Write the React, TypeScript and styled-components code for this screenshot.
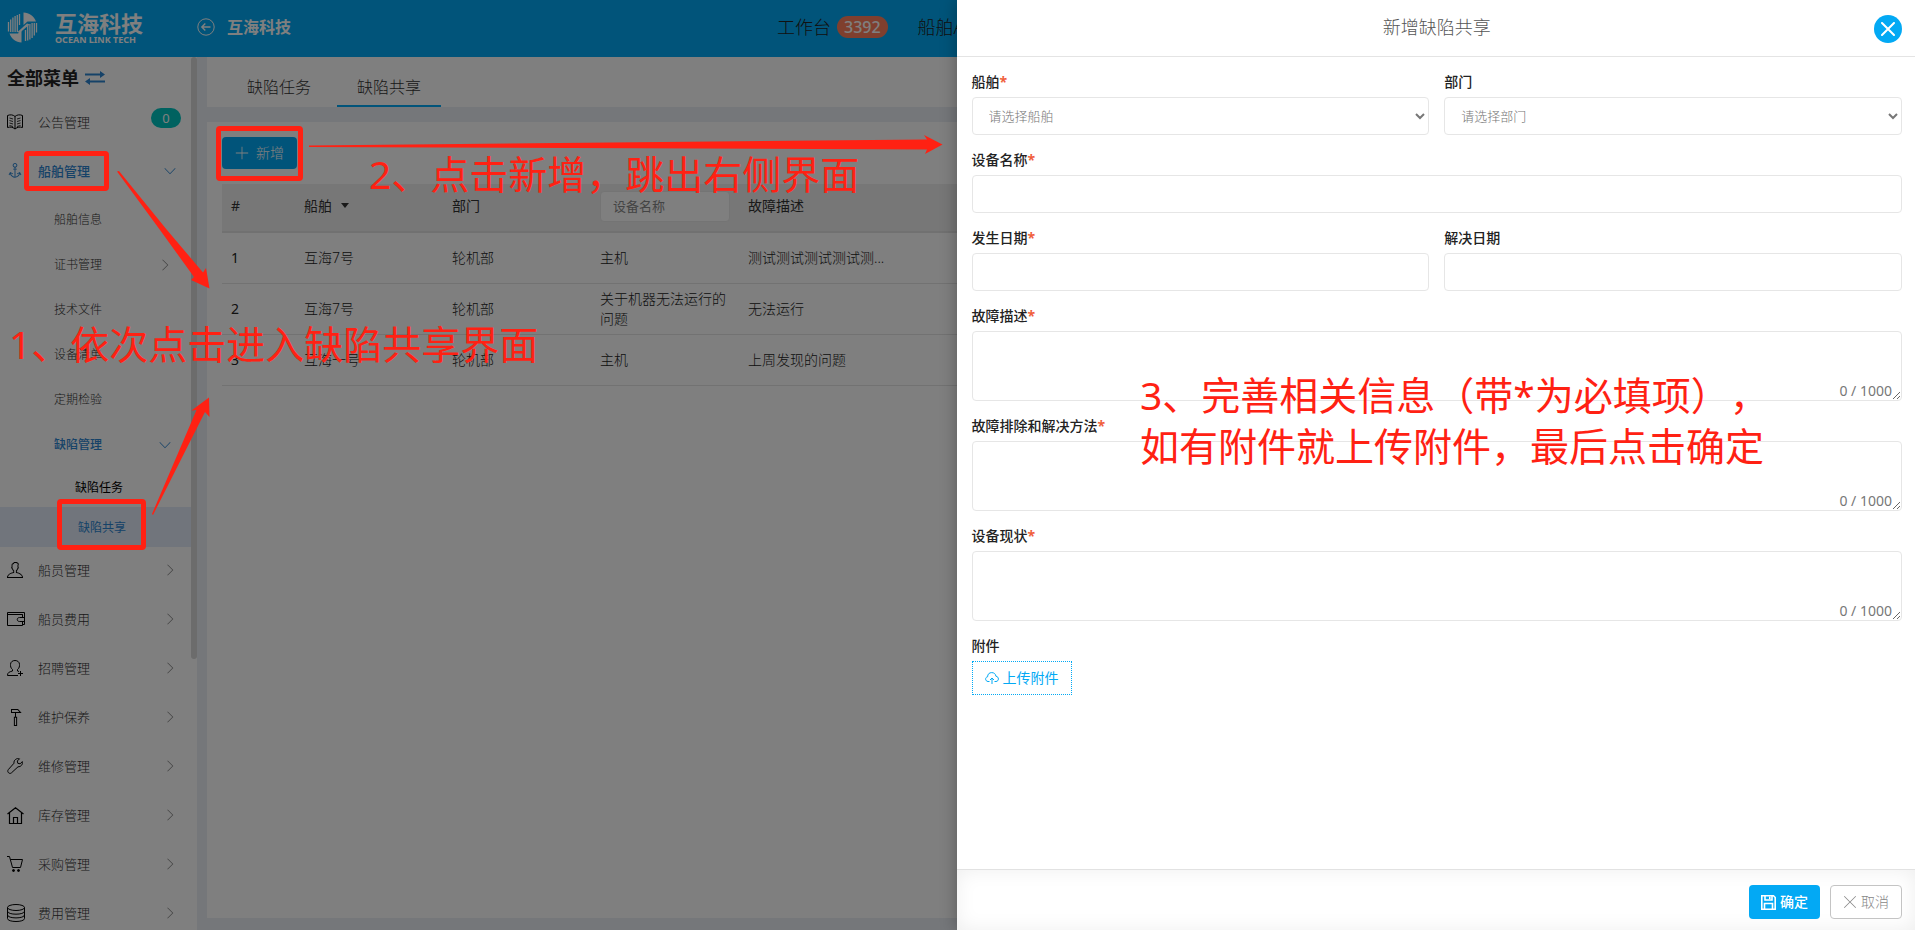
import React from "react";
import styled, { createGlobalStyle, css } from "styled-components";
import { TfiAnchor, TfiAngleDown, TfiAngleRight, TfiClose, TfiHummer, TfiPlus, TfiUser } from "react-icons/tfi";

const PRIMARY = "#03a9f4";
const LINK = "#2d85d0";
const MARK = "#ff2113";

const GlobalStyle = createGlobalStyle`
  *, *::before, *::after { box-sizing: border-box; }
  body {
    margin: 0;
    overflow: hidden;
    font-family: "Noto Sans", "Noto Sans CJK SC", sans-serif;
    font-size: 14px;
    font-weight: 300;
    line-height: 20px;
    color: #222;
    background: #fff;
  }
  button, input, select, textarea { font: inherit; margin: 0; }
  a { color: inherit; text-decoration: none; }
`;

/* ---------- page shell ---------- */

const Page = styled.div`
  position: relative;
  display: flex;
  flex-direction: column;
  height: 100vh;
  overflow: hidden;
`;

const Header = styled.header`
  display: flex;
  align-items: center;
  flex: none;
  height: 57px;
  padding: 0 0 3px 7px;
  background: ${PRIMARY};
  color: #fff;
`;

const Brand = styled.a`
  display: flex;
  align-items: center;
  gap: 17px;
  width: 190px;
`;

const BrandText = styled.span`
  display: flex;
  flex-direction: column;
`;

const BrandName = styled.span`
  font-size: 22px;
  font-weight: 700;
  line-height: 24px;
`;

const BrandSub = styled.span`
  font-size: 9px;
  font-weight: 700;
  line-height: 9px;
  white-space: nowrap;
`;

const Company = styled.a`
  display: flex;
  align-items: center;
  gap: 12px;
  font-size: 16px;
  font-weight: 700;
`;

const TopNav = styled.nav`
  display: flex;
  align-items: center;
  gap: 30px;
  width: 1138px;
  margin-left: auto;
  font-size: 18px;
  color: #222;
`;

const NavLink = styled.a`
  display: flex;
  align-items: center;
  gap: 6px;
`;

const Count = styled.span`
  padding: 0 7px;
  border-radius: 11px;
  background: #ff7f5c;
  color: #fff;
  font-size: 16px;
  font-weight: 500;
  line-height: 22px;
`;

const Main = styled.div`
  display: flex;
  flex: 1;
  min-height: 0;
  background: #ebeff5;
`;

/* ---------- sidebar ---------- */

const Sidebar = styled.aside`
  display: flex;
  flex: none;
  width: 197px;
  overflow: hidden;
  background: #fff;
`;

const Menu = styled.nav`
  flex: 1;
  min-width: 0;
`;

const Rail = styled.div`
  width: 6px;
`;

const RailThumb = styled.div`
  height: 69%;
  border-radius: 3px;
  background: #d8d8d8;
`;

const MenuTitle = styled.h2`
  display: flex;
  align-items: center;
  gap: 6px;
  height: 42px;
  margin: 0;
  padding-left: 7px;
  font-size: 18px;
  font-weight: 700;
  color: #222;
  svg { color: ${LINK}; }
`;

type Level = 1 | 2 | 3;

const levels = {
  1: css`
    height: 49px;
    padding: 0 15px 3px 7px;
    font-size: 13px;
  `,
  2: css`
    height: 45px;
    padding: 0 20px 0 54px;
    font-size: 12px;
  `,
  3: css`
    height: 40px;
    padding: 2px 20px 0 75px;
    font-size: 12px;
    font-weight: 400;
  `,
};

const MenuItem = styled.a<{ $level: Level; $open?: boolean; $current?: boolean }>`
  display: flex;
  align-items: center;
  gap: 15px;
  color: ${(p) => (p.$open || p.$current ? LINK : p.$level === 3 ? "#000" : "#333")};
  font-weight: ${(p) => (p.$open ? 500 : "inherit")};
  ${(p) => levels[p.$level]}
  ${(p) =>
    p.$current &&
    css`
      border-left: 3px solid #e3ebf8;
      background: #e3ebf8;
    `}
`;

const MenuLabel = styled.span`
  flex: 1;
`;

const MenuIcon = styled.span<{ $open?: boolean }>`
  display: flex;
  width: 16px;
  color: ${(p) => (p.$open ? LINK : "#000")};
  svg { flex: none; }
`;

const Arrow = styled.span<{ $open?: boolean }>`
  display: flex;
  color: ${(p) => (p.$open ? LINK : "#888")};
`;

const Bubble = styled.span`
  align-self: flex-start;
  width: 30px;
  margin: 9px -5px 0 0;
  border-radius: 10px;
  background: #00c4c0;
  color: #fff;
  font-weight: 400;
  line-height: 20px;
  text-align: center;
`;

/* ---------- list page ---------- */

const Content = styled.main`
  display: flex;
  flex-direction: column;
  flex: 1;
  gap: 15px;
  min-width: 0;
  padding: 0 10px 12px;
`;

const Tabs = styled.div`
  display: flex;
  gap: 6px;
  height: 50px;
  padding: 0 20px;
  background: #fff;
`;

const Tab = styled.a<{ $active?: boolean }>`
  padding: 20px 20px 8px;
  border-bottom: 2px solid ${(p) => (p.$active ? PRIMARY : "transparent")};
  font-size: 16px;
  color: #333;
`;

const Panel = styled.section`
  display: flex;
  flex-direction: column;
  align-items: flex-start;
  flex: 1;
  gap: 15px;
  padding: 15px;
  background: #fff;
`;

const Table = styled.table`
  width: 100%;
  table-layout: fixed;
  border-collapse: separate;
  border-spacing: 0;
`;

const HeadCell = styled.th<{ $width?: number }>`
  width: ${(p) => (p.$width ? `${p.$width}px` : "auto")};
  height: 49px;
  padding: 0 9px 3px;
  border-bottom: 2px solid #e2e2e2;
  background: #eee;
  font-weight: 400;
  text-align: left;
  color: #333;
`;

const Cell = styled.td`
  height: 51px;
  padding: 0 9px;
  border-bottom: 1px solid #e5e5e5;
  color: #222;
  &:first-child { font-weight: 400; }
`;

const Caret = styled.span`
  display: inline-block;
  margin: 0 0 3px 9px;
  border: 4px solid transparent;
  border-top: 5px solid #333;
  border-bottom: 0;
`;

const FilterInput = styled.input`
  display: block;
  width: 100%;
  height: 31px;
  padding: 0 12px;
  border: 1px solid #e8e8e8;
  border-radius: 4px;
  background: #fff;
  font-size: 13px;
  &::placeholder { color: #888; }
`;

/* ---------- buttons ---------- */

const buttonKinds = {
  add: css`
    height: 32px;
    padding: 0 13px;
    gap: 7px;
    border: 0;
    background: ${PRIMARY};
    color: #fff;
  `,
  primary: css`
    padding: 0 12px;
    border: 0;
    background: ${PRIMARY};
    color: #fff;
    font-weight: 500;
  `,
  plain: css`
    padding: 0 12px;
    border: 1px solid #c4c4c4;
    background: #fff;
    color: #888;
  `,
  upload: css`
    padding: 0 12px;
    border: 1px dotted ${PRIMARY};
    border-radius: 0;
    background: #fff;
    color: ${PRIMARY};
    font-weight: 400;
  `,
};

const Button = styled.button<{ $kind: keyof typeof buttonKinds }>`
  display: inline-flex;
  align-items: center;
  gap: 4px;
  height: 34px;
  border-radius: 4px;
  white-space: nowrap;
  ${(p) => buttonKinds[p.$kind]}
`;

/* ---------- drawer ---------- */

const Backdrop = styled.div`
  position: absolute;
  inset: 0;
  background: rgba(0, 0, 0, 0.5);
`;

const Drawer = styled.section`
  position: absolute;
  inset: 0 0 0 calc(50% - 1px);
  display: flex;
  flex-direction: column;
  background: #fff;
  box-shadow: 0 0 16px rgba(0, 0, 0, 0.3);
`;

const DrawerHead = styled.header`
  display: grid;
  grid-template-columns: 28px 1fr 28px;
  align-items: center;
  flex: none;
  height: 57px;
  padding: 0 13px 0 15px;
  border-bottom: 1px solid #e4e4e4;
`;

const DrawerTitle = styled.h1`
  grid-column: 2;
  margin: 0;
  padding-bottom: 2px;
  font-size: 18px;
  font-weight: 300;
  line-height: 24px;
  text-align: center;
  color: #555;
`;

const CloseButton = styled.button`
  display: flex;
  align-items: center;
  justify-content: center;
  width: 28px;
  height: 28px;
  margin-top: 2px;
  padding: 0;
  border: 0;
  border-radius: 50%;
  background: ${PRIMARY};
  color: #fff;
`;

const Form = styled.form`
  display: grid;
  grid-template-columns: 1fr 1fr;
  align-content: start;
  flex: 1;
  gap: 15px;
  min-height: 0;
  padding: 15px 13px 15px 15px;
`;

const Field = styled.div<{ $wide?: boolean }>`
  position: relative;
  display: flex;
  flex-direction: column;
  align-items: flex-start;
  gap: 5px;
  grid-column: ${(p) => (p.$wide ? "1 / -1" : "auto")};
`;

const Label = styled.label`
  font-weight: 500;
  color: #222;
`;

const Star = styled.span`
  font-weight: 700;
  color: #f0603c;
`;

const control = css`
  display: block;
  width: 100%;
  border: 1px solid #e6e6e6;
  border-radius: 4px;
  background: #fff;
`;

const Select = styled.select`
  ${control}
  height: 38px;
  padding: 0 0 0 12px;
  font-size: 13px;
  color: #777;
`;

const Input = styled.input`
  ${control}
  height: 38px;
  padding: 0 12px;
`;

const TextArea = styled.textarea`
  ${control}
  height: 70px;
  padding: 8px 12px;
  resize: vertical;
`;

const Counter = styled.span`
  position: absolute;
  right: 10px;
  bottom: 0;
  font-weight: 400;
  color: #777;
`;

const DrawerFoot = styled.footer`
  display: flex;
  justify-content: flex-end;
  flex: none;
  gap: 10px;
  height: 61px;
  padding: 15px 13px 0 15px;
  border-top: 1px solid #e2e2e2;
  box-shadow: inset 0 0 20px rgba(0, 0, 0, 0.07);
`;

/* ---------- tutorial marks over the page ---------- */

const Marks = styled.div`
  position: absolute;
  inset: 0;
  pointer-events: none;
`;

const MarkBox = styled.div<{ $x: number; $y: number; $w: number; $h: number }>`
  position: absolute;
  left: ${(p) => p.$x}px;
  top: ${(p) => p.$y}px;
  width: ${(p) => p.$w}px;
  height: ${(p) => p.$h}px;
  border: 5px solid ${MARK};
  border-radius: 4px;
`;

const MarkText = styled.p<{ $x: number; $y: number }>`
  position: absolute;
  left: ${(p) => p.$x}px;
  top: ${(p) => p.$y}px;
  margin: 0;
  font-size: 39px;
  font-weight: 400;
  line-height: 51px;
  white-space: nowrap;
  text-spacing-trim: space-all;
  color: ${MARK};
`;

const MarkArrows = styled.svg`
  position: absolute;
  left: 0;
  top: 0;
  fill: ${MARK};
`;

/* ---------- drawings ---------- */

const Logo = () => (
  <svg width="31" height="31" viewBox="0 0 31 31" aria-hidden="true">
    <g fill="none" stroke="#fff" strokeWidth="1.3">
      <path d="M1.500 10v9.500M3.700 7.500V20M5.900 5.500V20M8.100 4v16M10.300 3v17M12.500 2v11" />
      <path d="M29.500 11v9.500M27.300 11v12.500M25.100 11v15M22.900 12v15.500M20.700 13v15.500M18.500 18v11" />
    </g>
    <path fill="#fff" d="M16.500 .5C22 .8 27 4 29 9.500h-8.500l-4 3.500z" />
    <path fill="#fff" d="M14.500 30.500C9 30.200 4.500 27 2.500 21.500H11l3.500-3z" />
    <path fill="#fff" d="M10.500 20l9.500-8.500 2.500 1L12.500 21z" />
  </svg>
);

const BackIcon = () => (
  <svg width="18" height="18" viewBox="0 0 18 18" fill="none" stroke="currentColor" aria-hidden="true">
    <circle cx="9" cy="9" r="8.200" />
    <path strokeWidth="1.400" d="M13.500 9H5M8.300 5.500L4.800 9l3.500 3.500" />
  </svg>
);

const SwapIcon = () => (
  <svg width="20" height="14" viewBox="0 0 20 14" fill="currentColor" aria-hidden="true">
    <path d="M0 2.500h15V0l5 3.500-5 3.500V4.500H0z" />
    <path d="M20 9.500H5V7l-5 3.500L5 14v-2.500h15z" />
  </svg>
);

const Line = styled.svg.attrs({ fill: "none", stroke: "currentColor", "aria-hidden": true })``;

const BookIcon = () => (
  <Line width="16" height="16" viewBox="0 0 16 16">
    <path d="M.5 1.500C3 .5 6 .5 8 2.500c2-2 5-2 7.500-1v12c-2.500-.7-5-.7-7.500 1.500-2.500-2.200-5-2.200-7.500-1.500zM8 2.500V15" />
    <path
      strokeWidth=".8"
      d="M2.500 4l3.500 1M2.500 6.500l3.500 1M2.500 9l3.500 1M2.500 11.500l3.500 1M13.500 4L10 5M13.500 6.500L10 7.500M13.500 9L10 10M13.500 11.500l-3.500 1"
    />
  </Line>
);

const WalletIcon = () => (
  <Line width="18" height="14" viewBox="0 0 18 14">
    <path d="M15.500 4.500v-2M.5 .5h17v12h-2M15.500 9.500v4H.5V.5M.5 2.500h15v3M17.500 5.500h-5c-3 0-3 4 0 4h5" />
  </Line>
);

const RecruitIcon = () => (
  <Line width="16" height="16" viewBox="0 0 16 16">
    <path d="M11 15.500H.5c0-3 1.500-3.500 5-4.500V9.500C3.500 8 3.500 6 3.500 4.500 3.500 2 5.500.5 8 .5s4.500 1.500 4.500 4c0 1.500 0 3.500-2 5V11l1.500.5M13.500 11v5M11 13.500h5" />
  </Line>
);

const WrenchIcon = () => (
  <Line width="16" height="16" viewBox="0 0 16 16" strokeLinejoin="round">
    <path d="M12.500 .8L10.300 3l.5 2.300 2.300.5 2.200-2.200c.7 2.800-1.300 5.300-4.300 5.200L4.500 14.800c-1.800 1.800-5-.8-3.200-3.200L7 5.200C6.500 2.200 9.500-.2 12.500.8z" />
  </Line>
);

const HomeIcon = () => (
  <Line width="17" height="17" viewBox="0 0 17 17" strokeWidth="1.200">
    <path d="M.5 7l8-6.200 8 6.200M2.500 5.500v11h12v-11M6.500 16.500v-6h4v6" />
  </Line>
);

const CartIcon = () => (
  <Line width="16" height="16" viewBox="0 0 16 16">
    <path d="M0 .5h2.500l3 11h8l2-8H3.500" />
    <circle cx="6.500" cy="14.500" r="1" fill="currentColor" />
    <circle cx="11.500" cy="14.500" r="1" fill="currentColor" />
  </Line>
);

const CoinsIcon = () => (
  <Line width="18" height="18" viewBox="0 0 18 18">
    <ellipse cx="9" cy="3.500" rx="8.500" ry="3" />
    <path d="M.5 3.500v11c0 4 17 4 17 0v-11M.5 7.200c0 4 17 4 17 0M.5 10.900c0 4 17 4 17 0" />
  </Line>
);

const CloudUpIcon = () => (
  <Line width="14" height="12" viewBox="0 0 14 12">
    <path d="M4.500 9.500H3C0 9.200-.2 5.200 2.600 4.800 2.600 2 4.400.6 6.700.6s3.900 1.300 4.200 3.600c3.400.5 3.200 5.100.1 5.300H9.500M7 12V6.200M5 8l2-2 2 2" />
  </Line>
);

const SaveIcon = () => (
  <Line width="15" height="15" viewBox="0 0 15 15" strokeWidth="1.600">
    <path d="M.8.8h11.700l1.700 1.700v11.700H.8zM3.500 14V8.500h8V14M4 1v4h7V1" />
    <path d="M8.800 1.500v2.500" />
  </Line>
);

/* ---------- data ---------- */

type Item = {
  text: string;
  level: Level;
  icon?: React.ReactNode;
  arrow?: boolean;
  open?: boolean;
  current?: boolean;
  badge?: number;
};

const menu: Item[] = [
  { text: "公告管理", level: 1, icon: <BookIcon />, badge: 0 },
  { text: "船舶管理", level: 1, icon: <TfiAnchor size={16} />, arrow: true, open: true },
  { text: "船舶信息", level: 2 },
  { text: "证书管理", level: 2, arrow: true },
  { text: "技术文件", level: 2 },
  { text: "设备清单", level: 2 },
  { text: "定期检验", level: 2 },
  { text: "缺陷管理", level: 2, arrow: true, open: true },
  { text: "缺陷任务", level: 3 },
  { text: "缺陷共享", level: 3, current: true },
  { text: "船员管理", level: 1, icon: <TfiUser size={16} />, arrow: true },
  { text: "船员费用", level: 1, icon: <WalletIcon />, arrow: true },
  { text: "招聘管理", level: 1, icon: <RecruitIcon />, arrow: true },
  { text: "维护保养", level: 1, icon: <TfiHummer size={17} />, arrow: true },
  { text: "维修管理", level: 1, icon: <WrenchIcon />, arrow: true },
  { text: "库存管理", level: 1, icon: <HomeIcon />, arrow: true },
  { text: "采购管理", level: 1, icon: <CartIcon />, arrow: true },
  { text: "费用管理", level: 1, icon: <CoinsIcon />, arrow: true },
];

const rows = [
  ["1", "互海7号", "轮机部", "主机", "测试测试测试测试测..."],
  ["2", "互海7号", "轮机部", "关于机器无法运行的问题", "无法运行"],
  ["3", "互海一号", "轮机部", "主机", "上周发现的问题"],
];

const FieldLabel = ({ id, text, required }: { id: string; text: string; required?: boolean }) => (
  <Label htmlFor={id}>
    {text}
    {required && <Star>*</Star>}
  </Label>
);

const LongText = ({ id, text }: { id: string; text: string }) => (
  <Field $wide>
    <FieldLabel id={id} text={text} required />
    <TextArea id={id} maxLength={1000} />
    <Counter>0 / 1000</Counter>
  </Field>
);

export default function App() {
  return (
    <Page>
      <GlobalStyle />
      <Header>
        <Brand href="#">
          <Logo />
          <BrandText>
            <BrandName>互海科技</BrandName>
            <BrandSub>OCEAN LINK TECH</BrandSub>
          </BrandText>
        </Brand>
        <Company href="#">
          <BackIcon />
          互海科技
        </Company>
        <TopNav>
          <NavLink href="#">
            工作台<Count>3392</Count>
          </NavLink>
          <NavLink href="#">船舶A</NavLink>
        </TopNav>
      </Header>

      <Main>
        <Sidebar>
          <Menu>
            <MenuTitle>
              全部菜单
              <SwapIcon />
            </MenuTitle>
            {menu.map((m) => (
              <MenuItem key={m.text + m.level} href="#" $level={m.level} $open={m.open} $current={m.current}>
                {m.icon && <MenuIcon $open={m.open}>{m.icon}</MenuIcon>}
                <MenuLabel>{m.text}</MenuLabel>
                {m.badge !== undefined && <Bubble>{m.badge}</Bubble>}
                {m.arrow && (
                  <Arrow $open={m.open}>{m.open ? <TfiAngleDown size={12} /> : <TfiAngleRight size={12} />}</Arrow>
                )}
              </MenuItem>
            ))}
          </Menu>
          <Rail>
            <RailThumb />
          </Rail>
        </Sidebar>

        <Content>
          <Tabs>
            <Tab href="#">缺陷任务</Tab>
            <Tab href="#" $active>
              缺陷共享
            </Tab>
          </Tabs>
          <Panel>
            <Button type="button" $kind="add">
              <TfiPlus size={14} />
              新增
            </Button>
            <Table>
              <thead>
                <tr>
                  <HeadCell $width={73}>#</HeadCell>
                  <HeadCell $width={148}>
                    船舶
                    <Caret />
                  </HeadCell>
                  <HeadCell $width={148}>部门</HeadCell>
                  <HeadCell $width={148}>
                    <FilterInput placeholder="设备名称" aria-label="设备名称" />
                  </HeadCell>
                  <HeadCell>故障描述</HeadCell>
                </tr>
              </thead>
              <tbody>
                {rows.map((r) => (
                  <tr key={r[0]}>
                    {r.map((c, i) => (
                      <Cell key={i}>{c}</Cell>
                    ))}
                  </tr>
                ))}
              </tbody>
            </Table>
          </Panel>
        </Content>
      </Main>

      <Backdrop />

      <Drawer role="dialog" aria-labelledby="drawer-title">
        <DrawerHead>
          <DrawerTitle id="drawer-title">新增缺陷共享</DrawerTitle>
          <CloseButton type="button" aria-label="关闭">
            <svg width="14" height="14" viewBox="0 0 14 14" stroke="#fff" strokeWidth="2" strokeLinecap="round">
              <path d="M1 1l12 12M13 1L1 13" />
            </svg>
          </CloseButton>
        </DrawerHead>
        <Form>
          <Field>
            <FieldLabel id="ship" text="船舶" required />
            <Select id="ship">
              <option>请选择船舶</option>
            </Select>
          </Field>
          <Field>
            <FieldLabel id="dept" text="部门" />
            <Select id="dept">
              <option>请选择部门</option>
            </Select>
          </Field>
          <Field $wide>
            <FieldLabel id="device" text="设备名称" required />
            <Input id="device" />
          </Field>
          <Field>
            <FieldLabel id="found" text="发生日期" required />
            <Input id="found" />
          </Field>
          <Field>
            <FieldLabel id="solved" text="解决日期" />
            <Input id="solved" />
          </Field>
          <LongText id="fault" text="故障描述" />
          <LongText id="solution" text="故障排除和解决方法" />
          <LongText id="status" text="设备现状" />
          <Field $wide>
            <FieldLabel id="attachment" text="附件" />
            <Button id="attachment" type="button" $kind="upload">
              <CloudUpIcon />
              上传附件
            </Button>
          </Field>
        </Form>
        <DrawerFoot>
          <Button type="button" $kind="primary">
            <SaveIcon />
            确定
          </Button>
          <Button type="button" $kind="plain">
            <TfiClose size={14} />
            取消
          </Button>
        </DrawerFoot>
      </Drawer>

      <Marks>
        <MarkBox $x={24} $y={151} $w={85} $h={40} />
        <MarkBox $x={216} $y={126} $w={87} $h={55} />
        <MarkBox $x={57} $y={499} $w={89} $h={51} />
        <MarkArrows width="960" height="530" viewBox="0 0 960 530" aria-hidden="true">
          <path d="M117 171.500L160 230l34 47-3 3 18.500 8.500-3.500-20.500-3 4.500-36-42.500-48-59z" />
          <path d="M152 514l44.500-104-5 .5L209 397.500l.5 19.500-4.500-5-52 103z" />
          <path d="M309 145.500l618-6-3-4.500 18.500 9.500-17.500 9.500 2-4.500-618-2.500z" />
        </MarkArrows>
        <MarkText $x={9} $y={318}>1、依次点击进入缺陷共享界面</MarkText>
        <MarkText $x={369} $y={148}>2、点击新增，跳出右侧界面</MarkText>
        <MarkText $x={1140} $y={369}>
          3、完善相关信息（带*为必填项），
          <br />
          如有附件就上传附件，最后点击确定
        </MarkText>
      </Marks>
    </Page>
  );
}
